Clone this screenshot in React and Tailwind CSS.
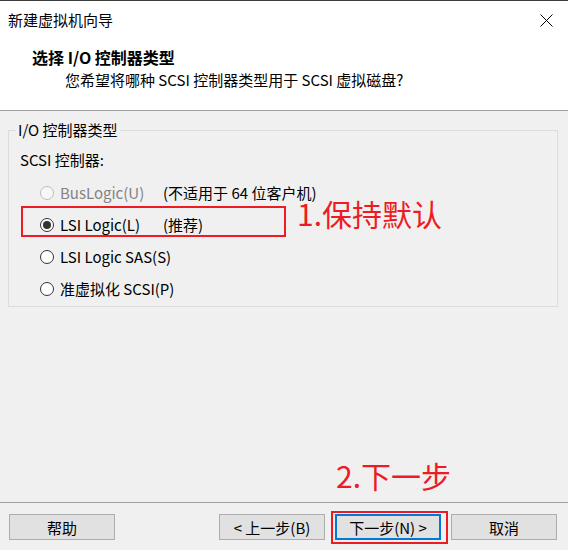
import React from 'react';

const font = "font-['Noto_Sans_CJK_SC','Noto_Sans',sans-serif]";

const Radio = ({ checked, disabled, label, note }) => (
    <div className="h-[32px] flex items-center pl-[31px] whitespace-nowrap">
        <span
            className={
                "w-[14px] h-[14px] rounded-full border flex items-center justify-center shrink-0 " +
                (disabled ? "border-[#bcbcbc] bg-[#f7f7f7]" : "border-[#333333] bg-white")
            }
        >
            {checked && <span className="w-[8px] h-[8px] rounded-full bg-[#333333]" />}
        </span>
        <span className={"ml-[6px] " + (note ? "w-[103px] " : "") + (disabled ? "text-[#838383]" : "text-black")}>{label}</span>
        {note && <span className="text-black">{note}</span>}
    </div>
);

const Button = ({ children, focused }) => (
    <button
        className={
            "w-[106px] h-[26px] bg-[#e1e1e1] text-[15px] leading-none text-black flex items-center justify-center " +
            (focused ? "border-2 border-[#0078d7]" : "border border-[#adadad]")
        }
    >
        {children}
    </button>
);

export default function App() {
    return (
        <div className={"relative w-[568px] h-[550px] flex flex-col bg-[#f0f0f0] text-[15px] leading-[20px] " + font}>
            <div className="h-px bg-[#3c3c3c]" />

            {/* header */}
            <div className="h-[109px] bg-white flex flex-col">
                <div className="flex items-center justify-between pl-[8px] pr-[15px] pt-[9px]">
                    <span className="text-black">新建虚拟机向导</span>
                    <svg width="13" height="13" viewBox="0 0 13 13" className="text-black">
                        <path d="M0.5 0.5 L12.5 12.5 M12.5 0.5 L0.5 12.5" stroke="currentColor" strokeWidth="1" fill="none" />
                    </svg>
                </div>
                <div className="pl-[32px] mt-[17px] text-[16px] font-bold text-black">选择 I/O 控制器类型</div>
                <div className="pl-[65px] mt-[3px] text-black">您希望将哪种 SCSI 控制器类型用于 SCSI 虚拟磁盘?</div>
            </div>
            <div className="h-px bg-[#a0a0a0]" />

            {/* body */}
            <div className="flex-1 flex flex-col">
                <div className="relative mt-[19px] ml-[8px] mr-[10px] h-[177px] border border-[#dcdcdc]">
                    <span className="absolute -top-[11px] left-[7px] px-[2px] bg-[#f0f0f0] text-black">I/O 控制器类型</span>
                    <div className="pl-[11px] pt-[19px] text-black">SCSI 控制器:</div>
                    <div className="mt-[7px] flex flex-col">
                        <Radio disabled label="BusLogic(U)" note="(不适用于 64 位客户机)" />
                        <Radio checked label="LSI Logic(L)" note="(推荐)" />
                        <Radio label="LSI Logic SAS(S)" />
                        <Radio label="准虚拟化 SCSI(P)" />
                    </div>
                </div>
            </div>

            {/* footer */}
            <div className="h-px bg-[#a0a0a0]" />
            <div className="flex items-center pt-[11px] pb-[10px] pl-[9px] pr-[11px]">
                <Button>帮助</Button>
                <div className="flex-1" />
                <div className="flex gap-[10px]">
                    <Button>&lt; 上一步(B)</Button>
                    <Button focused>下一步(N) &gt;</Button>
                    <Button>取消</Button>
                </div>
            </div>

            {/* annotations */}
            <div className="absolute left-[21px] top-[206px] w-[265px] h-[31px] border-2 border-[#ed1c24]" />
            <div className="absolute left-[297px] top-[194px] text-[30px] leading-[38px] text-[#ed1c24]">1.保持默认</div>
            <div className="absolute left-[331px] top-[511px] w-[117px] h-[33px] border-2 border-[#ed1c24]" />
            <div className="absolute left-[336px] top-[456px] text-[30px] leading-[38px] text-[#ed1c24]">2.下一步</div>
        </div>
    );
}
